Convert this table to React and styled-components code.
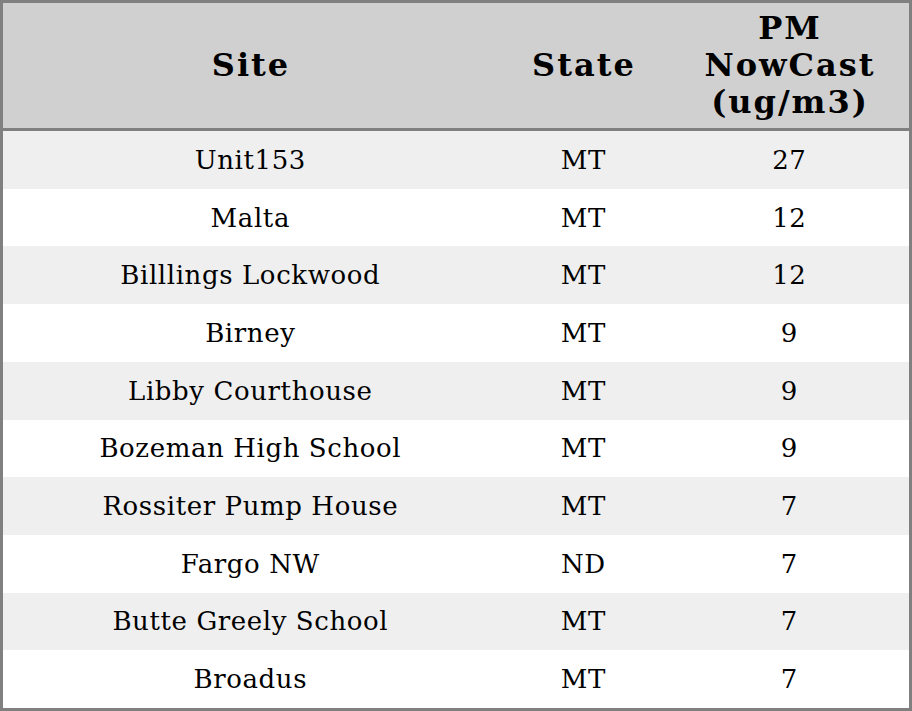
import styled, { createGlobalStyle } from 'styled-components';

const GlobalStyle = createGlobalStyle`
  html, body {
    margin: 0;
    padding: 0;
    background: #ffffff;
  }
  #root {
    height: 100vh;
  }
`;

const rows = [
  { site: 'Unit153', state: 'MT', pm: 27 },
  { site: 'Malta', state: 'MT', pm: 12 },
  { site: 'Billlings Lockwood', state: 'MT', pm: 12 },
  { site: 'Birney', state: 'MT', pm: 9 },
  { site: 'Libby Courthouse', state: 'MT', pm: 9 },
  { site: 'Bozeman High School', state: 'MT', pm: 9 },
  { site: 'Rossiter Pump House', state: 'MT', pm: 7 },
  { site: 'Fargo NW', state: 'ND', pm: 7 },
  { site: 'Butte Greely School', state: 'MT', pm: 7 },
  { site: 'Broadus', state: 'MT', pm: 7 },
];

// Whole table: outer frame, header band, then rows sharing the rest
const Table = styled.div`
  box-sizing: border-box;
  height: 100%;
  border: 3px solid #808080;
  display: grid;
  grid-template-rows: 128px repeat(10, 1fr);
  font-family: 'DejaVu Serif', serif;
  color: #000000;
`;

const Row = styled.div`
  display: grid;
  grid-template-columns: 494px 172px 1fr;
  align-items: center;
  background: ${p => (p.$shaded ? '#efefef' : '#ffffff')};
`;

const HeaderRow = styled(Row)`
  background: #d0d0d0;
  border-bottom: 3px solid #808080;
`;

const HeadCell = styled.div`
  text-align: center;
  font-weight: bold;
  font-size: 32px;
  line-height: 37px;
  letter-spacing: 2px;
  padding-left: 2px;
`;

const Cell = styled.div`
  text-align: center;
  font-size: 26px;
  line-height: 30px;
  letter-spacing: 0.6px;
  padding-left: 0.6px;
`;

export default function App() {
  return (
    <>
      <GlobalStyle />
      <Table>
        <HeaderRow>
          <HeadCell>Site</HeadCell>
          <HeadCell>State</HeadCell>
          <HeadCell>
            PM
            <br />
            NowCast
            <br />
            (ug/m3)
          </HeadCell>
        </HeaderRow>
        {rows.map((r, i) => (
          <Row key={r.site} $shaded={i % 2 === 0}>
            <Cell>{r.site}</Cell>
            <Cell>{r.state}</Cell>
            <Cell>{r.pm}</Cell>
          </Row>
        ))}
      </Table>
    </>
  );
}
